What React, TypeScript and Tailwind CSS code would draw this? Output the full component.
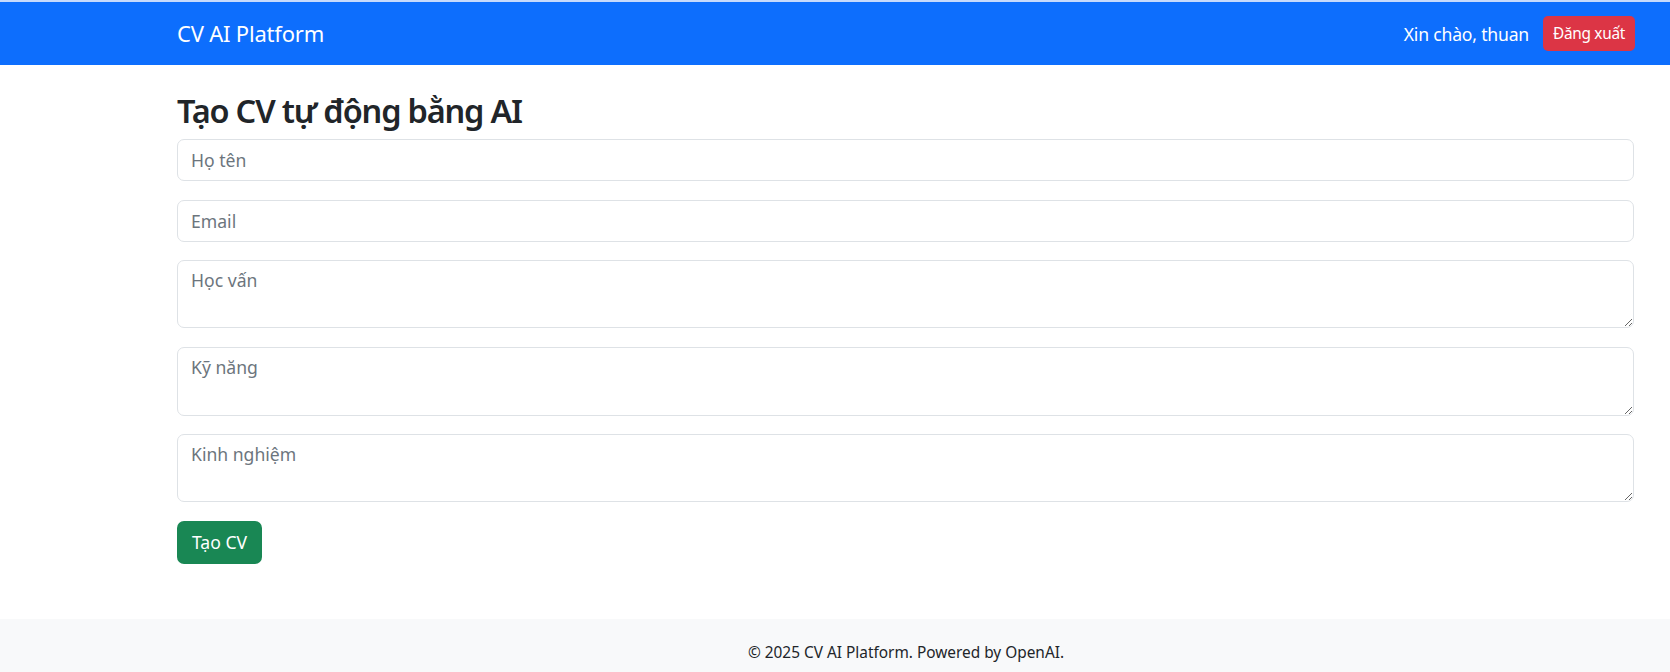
import React from 'react';

const font = { fontFamily: '"Noto Sans", "Open Sans", sans-serif' };

const inputClass =
  'block w-full rounded-[7px] border border-[#dee2e6] bg-white px-[13px] py-[6px] text-[17.6px] leading-[26.4px] text-[#212529] placeholder:text-[#6c757d] outline-none';

const App: React.FC = () => {
  return (
    <div className="min-h-screen bg-white font-['Noto_Sans',sans-serif] text-[#212529]">
      {/* thin light strip above the navbar */}
      <div className="h-[2px] bg-[#c6dafc]" />

      <nav className="flex h-[63px] items-center justify-between bg-[#0d6efd] pl-[177px] pr-[35px]">
        <a href="#" className="text-[22px] leading-[33px] tracking-[-0.2px] text-white">
          CV AI Platform
        </a>
        <div className="flex items-center">
          <span className="mr-[14px] text-[17.6px] leading-[26px] tracking-[-0.2px] text-white">Xin chào, thuan</span>
          <button className="h-[35px] rounded-[5px] bg-[#dc3545] px-[10px] text-[15.4px] tracking-[-0.3px] text-white">
            Đăng xuất
          </button>
        </div>
      </nav>

      <main className="pl-[177px] pr-[36px] pt-[25px] pb-[55px]">
        <h2 className="mb-[7px] text-[32.5px] font-semibold leading-[42px] tracking-[-1.2px]">Tạo CV tự động bằng AI</h2>
        <form className="flex flex-col gap-[18.6px]" onSubmit={(e) => e.preventDefault()}>
          <input type="text" placeholder="Họ tên" className={`${inputClass} h-[42px]`} />
          <input type="email" placeholder="Email" className={`${inputClass} h-[42px]`} />
          <textarea rows={2} placeholder="Học vấn" className={`${inputClass} h-[68px]`} />
          <textarea rows={2} placeholder="Kỹ năng" className={`${inputClass} h-[69px]`} />
          <textarea rows={2} placeholder="Kinh nghiệm" className={`${inputClass} h-[68px]`} />
          <div>
            <button
              type="submit"
              className="h-[43px] rounded-[7px] bg-[#198754] px-[15px] text-[17.6px] text-white"
            >
              Tạo CV
            </button>
          </div>
        </form>
      </main>

      <footer className="bg-[#f8f9fa] pl-[177px] pr-[35px] pt-[22px] pb-[20px]">
        <p className="text-center text-[15.4px] leading-[23px]" style={font}>
          © 2025 CV AI Platform. Powered by OpenAI.
        </p>
      </footer>
    </div>
  );
};

export default App;
